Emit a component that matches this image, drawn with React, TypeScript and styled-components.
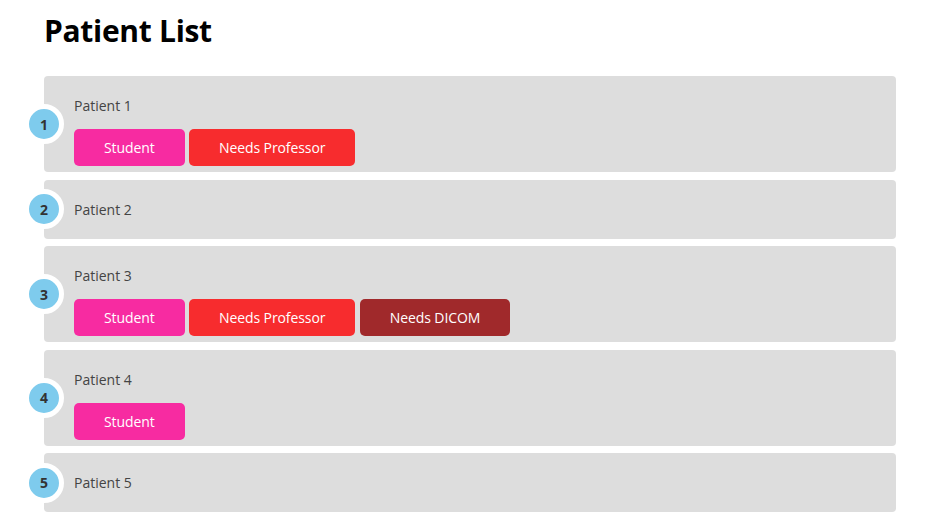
import styled, { createGlobalStyle } from "styled-components";

type TagKind = "student" | "professor" | "dicom";

type Patient = {
  id: number;
  name: string;
  tags: TagKind[];
};

const patients: Patient[] = [
  { id: 1, name: "Patient 1", tags: ["student", "professor"] },
  { id: 2, name: "Patient 2", tags: [] },
  { id: 3, name: "Patient 3", tags: ["student", "professor", "dicom"] },
  { id: 4, name: "Patient 4", tags: ["student"] },
  { id: 5, name: "Patient 5", tags: [] },
];

const tagLabels: Record<TagKind, string> = {
  student: "Student",
  professor: "Needs Professor",
  dicom: "Needs DICOM",
};

const tagColors: Record<TagKind, string> = {
  student: "#f72ba1",
  professor: "#f72c2e",
  dicom: "#a0292b",
};

const GlobalStyle = createGlobalStyle`
  body {
    margin: 0;
    background: #fff;
    font-family: "Open Sans", "Noto Sans", sans-serif;
  }
`;

export default function App() {
  return (
    <>
      <GlobalStyle />
      <Page>
        <Title>Patient List</Title>
        <List>
          {patients.map((p) => (
            <Card key={p.id} $hasTags={p.tags.length > 0}>
              <Badge>{p.id}</Badge>
              <Name>{p.name}</Name>
              {p.tags.length > 0 && (
                <Tags>
                  {p.tags.map((t) => (
                    <Tag key={t} $kind={t}>
                      {tagLabels[t]}
                    </Tag>
                  ))}
                </Tags>
              )}
            </Card>
          ))}
        </List>
      </Page>
    </>
  );
}

const Page = styled.div`
  padding: 12px 36px 16px 44px;
`;

const Title = styled.h1`
  margin: 0 0 26px;
  font-size: 30px;
  line-height: 38px;
  font-weight: 700;
  color: #000;
  letter-spacing: -0.3px;
`;

const List = styled.div`
  display: flex;
  flex-direction: column;
  gap: 7.5px;
`;

const Card = styled.div<{ $hasTags: boolean }>`
  position: relative;
  background: #dddddd;
  border-radius: 4px;
  padding: ${(p) => (p.$hasTags ? "20px 30px 6px" : "20px 30px")};
`;

const Badge = styled.div`
  position: absolute;
  left: -20px;
  top: 50%;
  transform: translateY(-50%);
  width: 30px;
  height: 30px;
  border: 5px solid #fff;
  border-radius: 50%;
  background: #7ecbed;
  color: #333;
  font-size: 14px;
  font-weight: 700;
  display: flex;
  align-items: center;
  justify-content: center;
`;

const Name = styled.div`
  font-size: 14px;
  line-height: 19px;
  color: #444;
`;

const Tags = styled.div`
  display: flex;
  gap: 4.5px;
  margin-top: 14px;
`;

const Tag = styled.div<{ $kind: TagKind }>`
  height: 37px;
  padding: 0 30px;
  border-radius: 5px;
  background: ${(p) => tagColors[p.$kind]};
  color: #fff;
  font-size: 14px;
  letter-spacing: -0.1px;
  display: flex;
  align-items: center;
  justify-content: center;
`;
